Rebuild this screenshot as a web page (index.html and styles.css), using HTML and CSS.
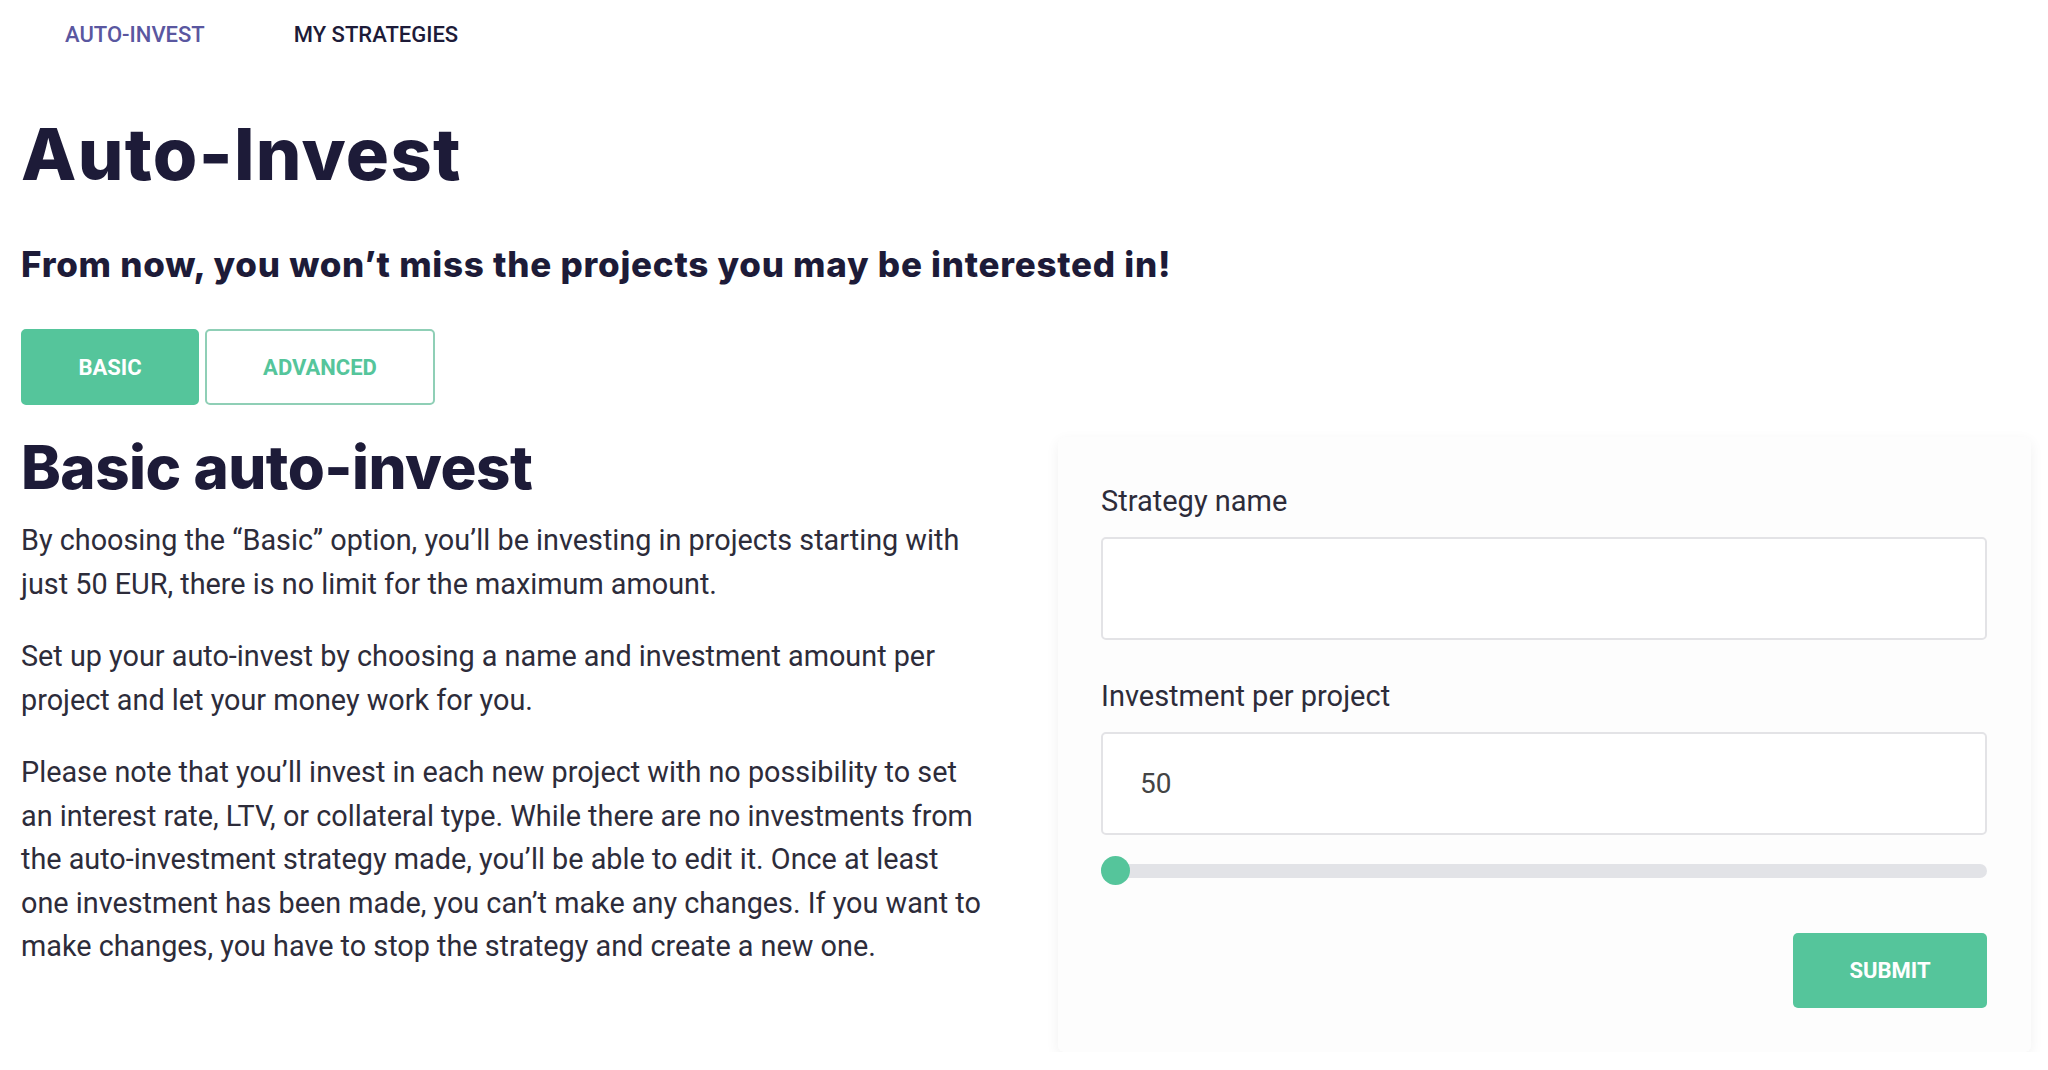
FILE: index.html
```html
<!DOCTYPE html>
<html lang="en">
<head>
  <meta charset="UTF-8">
  <title>Auto-Invest</title>
  <link rel="stylesheet" href="styles.css">
</head>
<body>
  <nav class="tabs">
    <a class="tab tab-active" href="#">AUTO-INVEST</a>
    <a class="tab" href="#">MY STRATEGIES</a>
  </nav>

  <h1 class="page-title">Auto-Invest</h1>
  <h2 class="page-subtitle">From now, you won’t miss the projects you may be interested in!</h2>

  <div class="mode-switch">
    <button class="mode-btn mode-btn-active">BASIC</button>
    <button class="mode-btn">ADVANCED</button>
  </div>

  <div class="content">
    <div class="intro">
      <h3 class="intro-title">Basic auto-invest</h3>
      <p>By choosing the “Basic” option, you’ll be investing in projects starting with just 50 EUR, there is no limit for the maximum amount.</p>
      <p>Set up your auto-invest by choosing a name and investment amount per project and let your money work for you.</p>
      <p>Please note that you’ll invest in each new project with no possibility to set an interest rate, LTV, or collateral type. While there are no investments from the auto-investment strategy made, you’ll be able to edit it. Once at least one investment has been made, you can’t make any changes. If you want to make changes, you have to stop the strategy and create a new one.</p>
    </div>

    <form class="strategy-card">
      <div class="form-item">
        <label class="form-item-label">Strategy name</label>
        <input class="form-input" type="text" value="">
      </div>

      <div class="form-item">
        <label class="form-item-label">Investment per project</label>
        <input class="form-input" type="text" value="50">
      </div>

      <div class="slider">
        <div class="slider-track"></div>
        <div class="slider-thumb"></div>
      </div>

      <div class="form-actions">
        <button class="submit-btn" type="button">SUBMIT</button>
      </div>
    </form>
  </div>
</body>
</html>
```

FILE: styles.css
```css
body {
  margin: 0;
  padding: 0 17px 0 21px;
  background: #fff;
  color: #1d1b38;
  font-family: Roboto, "Liberation Sans", sans-serif;
}

.tabs {
  display: flex;
  gap: 89px;
  padding: 23px 0 0 44px;
}

.tab {
  font-size: 22px;
  font-weight: 500;
  line-height: 24px;
  color: #1d1b38;
  text-decoration: none;
}

.tab-active {
  color: #5a57a0;
}

.page-title {
  font-family: Inter, "Liberation Sans", sans-serif;
  font-weight: 800;
  font-size: 72px;
  line-height: 80px;
  letter-spacing: 1.3px;
  margin: 67px 0 0;
}

.page-subtitle {
  font-family: Inter, "Liberation Sans", sans-serif;
  font-weight: 800;
  font-size: 35px;
  line-height: 40px;
  letter-spacing: 0.75px;
  margin: 50px 0 0;
}

.mode-switch {
  display: flex;
  gap: 6px;
  margin-top: 45px;
}

.mode-btn {
  height: 76px;
  border: 2px solid #8fcfb6;
  border-radius: 5px;
  background: #fff;
  color: #55c59b;
  font-family: Roboto, "Liberation Sans", sans-serif;
  font-weight: 700;
  font-size: 22px;
  width: 230px;
}

.mode-btn-active {
  width: 178px;
  background: #55c59b;
  border-color: #55c59b;
  color: #fff;
}

.content {
  display: flex;
  justify-content: space-between;
  align-items: flex-start;
}

.intro {
  width: 971px;
}

.intro-title {
  font-family: Inter, "Liberation Sans", sans-serif;
  font-weight: 800;
  font-size: 60px;
  line-height: 72px;
  letter-spacing: -0.5px;
  margin: 26px 0 0;
}

.intro p {
  font-size: 28.8px;
  line-height: 43.5px;
  color: #2d2c3a;
  margin: 0 0 29px;
}

.intro-title + p {
  margin-top: 16px;
}

.strategy-card {
  width: 973px;
  margin-top: 32px;
  box-sizing: border-box;
  padding: 48px 44px 44px 43px;
  background: #fdfdfd;
  border-radius: 6px;
  box-shadow: 0 4px 14px rgba(0, 0, 0, 0.06);
}

.form-item {
  margin-bottom: 40px;
}

.form-item-label {
  display: block;
  font-size: 29px;
  line-height: 32px;
  color: #2d2c3a;
  margin-bottom: 20px;
}

.form-input {
  display: block;
  width: 100%;
  height: 103px;
  box-sizing: border-box;
  border: 2px solid #e3e3e6;
  border-radius: 5px;
  background: #fff;
  padding: 0 37px;
  font-family: Roboto, "Liberation Sans", sans-serif;
  font-size: 28px;
  color: #444;
  outline: none;
}

.slider {
  position: relative;
  height: 30px;
  margin-top: -19px;
}

.slider-track {
  position: absolute;
  left: 0;
  right: 0;
  top: 8px;
  height: 14px;
  border-radius: 7px;
  background: #e2e3e7;
}

.slider-thumb {
  position: absolute;
  left: 0;
  top: 0;
  width: 29px;
  height: 29px;
  border-radius: 50%;
  background: #55c59b;
}

.form-actions {
  display: flex;
  justify-content: flex-end;
  margin-top: 47px;
}

.submit-btn {
  width: 194px;
  height: 75px;
  border: none;
  border-radius: 5px;
  background: #55c59b;
  color: #fff;
  font-family: Roboto, "Liberation Sans", sans-serif;
  font-weight: 700;
  font-size: 22px;
}
```
